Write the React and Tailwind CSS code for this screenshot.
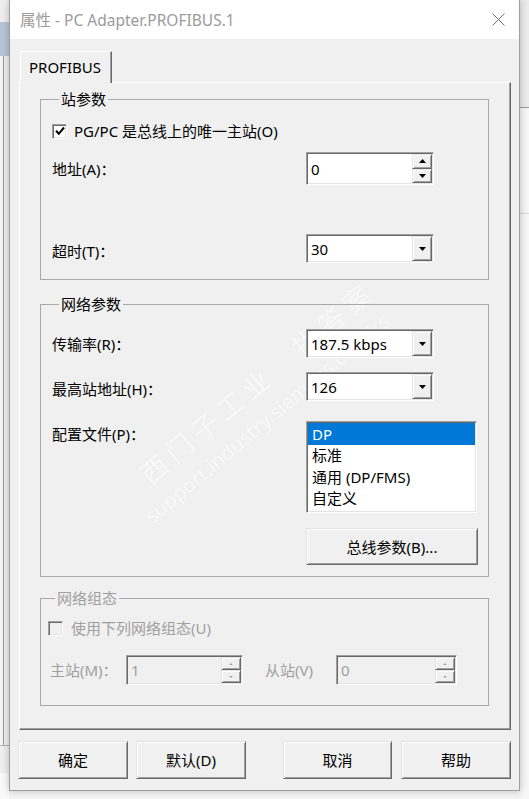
import React from 'react';

const sunken = 'border border-t-[#a0a0a0] border-l-[#a0a0a0] border-r-white border-b-white shadow-[inset_1px_1px_0_#696969,inset_-1px_-1px_0_#e3e3e3]';
const raised = 'border border-t-[#e3e3e3] border-l-[#e3e3e3] border-r-[#696969] border-b-[#696969] shadow-[inset_1px_1px_0_#ffffff,inset_-1px_-1px_0_#a0a0a0]';

function Arrow({ up, color = '#000', w = 7, h = 4 }) {
  return (
    <svg width={w} height={h} viewBox="0 0 7 4">
      <polygon points={up ? '0,4 7,4 3.5,0' : '0,0 7,0 3.5,4'} fill={color} />
    </svg>
  );
}

function Check({ checked, disabled }) {
  return (
    <div className={`w-[15px] h-[15px] shrink-0 flex items-center justify-center ${sunken} ${disabled ? 'bg-[#f0f0f0]' : 'bg-white'}`}>
      {checked && (
        <svg width="10" height="10" viewBox="0 0 10 10">
          <path d="M1 4.8 L3.8 7.8 L9 1.5" stroke="#000" strokeWidth="2" fill="none" />
        </svg>
      )}
    </div>
  );
}

function Spin({ value, className, disabled }) {
  const arrow = disabled ? '#a0a0a0' : '#000';
  return (
    <div className={`flex p-[1px] ${sunken} ${disabled ? 'bg-[#f0f0f0] text-[#a0a0a0]' : 'bg-white'} ${className}`}>
      <div className="flex-1 flex items-center pl-[3px]">{value}</div>
      <div className="w-[20px] flex flex-col">
        <div className={`flex-1 flex items-center justify-center bg-[#f0f0f0] ${raised}`}>
          {disabled ? <Arrow up color={arrow} w={4} h={2} /> : <Arrow up color={arrow} />}
        </div>
        <div className={`flex-1 flex items-center justify-center bg-[#f0f0f0] ${raised}`}>
          {disabled ? <Arrow color={arrow} w={4} h={2} /> : <Arrow color={arrow} />}
        </div>
      </div>
    </div>
  );
}

function Combo({ value, className }) {
  return (
    <div className={`flex p-[1px] bg-white ${sunken} ${className}`}>
      <div className="flex-1 flex items-center pl-[3px]">{value}</div>
      <div className={`w-[20px] flex items-center justify-center bg-[#f0f0f0] ${raised}`}>
        <Arrow />
      </div>
    </div>
  );
}

function Group({ title, disabled, className, children }) {
  return (
    <fieldset className={`border border-[#a9a9a9] ${className}`}>
      <legend className={`ml-[7px] px-[2px] leading-[20px] ${disabled ? 'text-[#a0a0a0]' : ''}`}>{title}</legend>
      {children}
    </fieldset>
  );
}

function Button({ children, className }) {
  return (
    <div className={`flex items-center justify-center bg-[#f0f0f0] ${raised} ${className}`}>{children}</div>
  );
}

const profiles = ['DP', '标准', '通用 (DP/FMS)', '自定义'];

export default function App() {
  return (
    <div className="relative flex items-start w-[529px] h-[799px] overflow-hidden bg-[#f6f6f6] text-[15px] leading-[20px] text-black font-['Noto_Sans','Noto_Sans_CJK_SC',sans-serif]">
      {/* window behind, left edge */}
      <div className="w-[9px] h-full shrink-0 flex flex-col">
        <div className="h-[22px] bg-[#f0f0f0]" />
        <div className="h-[34px] bg-[#b9c6d7]" />
        <div className="h-[689px] ml-[3px] border-l border-[#9a9a9a] bg-[#f0f0f0]" />
        <div className="h-[28px] border-t border-[#b4b4b4] bg-[#f0f0f0]" />
        <div className="flex-1 bg-[#fafafa]" />
      </div>

      {/* dialog */}
      <div className="relative z-10 w-[511px] h-[791px] shrink-0 flex flex-col border border-t-0 border-[#9f9f9f] shadow-[0_0_8px_rgba(0,0,0,0.25)]">
        <div className="h-[39px] shrink-0 bg-white flex items-center justify-between pl-[10px] pr-[14px] text-[15.5px] text-[#9b9b9b]">
          <span>属性 - PC Adapter.PROFIBUS.1</span>
          <svg width="13" height="13" viewBox="0 0 13 13">
            <path d="M0.5 0.5 L12.5 12.5 M12.5 0.5 L0.5 12.5" stroke="#707070" strokeWidth="1" />
          </svg>
        </div>

        <div className="flex-1 bg-[#f0f0f0] pl-[9px] pt-[12px]">
          <div className="relative z-10 -mb-[1px] ml-[1px] w-[92px] h-[32px] bg-[#f0f0f0] border border-b-0 border-t-white border-l-white border-r-[#696969] shadow-[inset_-1px_0_0_#a0a0a0] flex items-center pl-[8px] pb-[1px]">
            PROFIBUS
          </div>

          <div className="relative isolate w-[492px] h-[648px] border border-t-white border-l-white border-r-[#696969] border-b-[#696969] shadow-[inset_-1px_-1px_0_#a0a0a0] pl-[20px] pr-[21px] pt-[6px]">
            {/* watermark, behind the controls */}
            <div className="pointer-events-none absolute -z-10 left-[124px] top-[380px] origin-[0_50%] rotate-[-40deg] whitespace-nowrap text-[27px] leading-[30px] tracking-[6px] text-white/80 [text-shadow:0_0_1px_rgba(0,0,0,0.06)]">
              西门子工业　找答案
            </div>
            <div className="pointer-events-none absolute -z-10 left-[128px] top-[426px] origin-[0_50%] rotate-[-40deg] whitespace-nowrap text-[20px] leading-[20px] text-white/80 [text-shadow:0_0_1px_rgba(0,0,0,0.06)]">
              support.industry.siemens.com/cs
            </div>

            <Group title="站参数" className="pl-[11px] pr-[10px] pt-[12px] pb-[16px]">
              <div className="flex items-center h-[20px]">
                <Check checked />
                <span className="ml-[7px]">PG/PC 是总线上的唯一主站(O)</span>
              </div>
              <div className="flex items-center mt-[11px]">
                <span className="w-[254px]">地址(A)：</span>
                <Spin value="0" className="w-[128px] h-[33px]" />
              </div>
              <div className="flex items-center mt-[49px]">
                <span className="w-[254px] pt-[4px]">超时(T)：</span>
                <Combo value="30" className="w-[128px] h-[29px]" />
              </div>
            </Group>

            <Group title="网络参数" className="mt-[14px] pl-[11px] pr-[10px] pt-[15px] pb-[11px]">
              <div className="flex items-center">
                <span className="w-[254px]">传输率(R)：</span>
                <Combo value="187.5 kbps" className="w-[128px] h-[29px]" />
              </div>
              <div className="flex items-center mt-[14px]">
                <span className="w-[254px] pt-[4px]">最高站地址(H)：</span>
                <Combo value="126" className="w-[128px] h-[29px]" />
              </div>
              <div className="flex items-start mt-[20px]">
                <span className="w-[254px] pt-[3px]">配置文件(P)：</span>
                <div className={`w-[171px] h-[92px] p-[1px] bg-white ${sunken}`}>
                  {profiles.map((p, i) => (
                    <div key={p} className={`h-[21.5px] flex items-center pl-[4px] ${i === 0 ? 'bg-[#0078d7] text-white' : ''}`}>{p}</div>
                  ))}
                </div>
              </div>
              <div className="mt-[15px] pl-[254px]">
                <Button className="w-[172px] h-[37px]">总线参数(B)...</Button>
              </div>
            </Group>

            <Group title="网络组态" disabled className="mt-[11px] pl-[7px] pr-[10px] pt-[10px] pb-[20px] text-[#a0a0a0]">
              <div className="flex items-center h-[20px]">
                <Check disabled />
                <span className="ml-[8px]">使用下列网络组态(U)</span>
              </div>
              <div className="flex items-center mt-[17px]">
                <span className="ml-[2px] w-[76px]">主站(M)：</span>
                <Spin disabled value="1" className="w-[117px] h-[30px]" />
                <span className="ml-[22px] w-[71px]">从站(V)</span>
                <Spin disabled value="0" className="w-[121px] h-[30px]" />
              </div>
            </Group>
          </div>

          <div className="flex -ml-[1px] mt-[11px]">
            <Button className="w-[110px] h-[38px]">确定</Button>
            <Button className="ml-[8px] w-[110px] h-[38px]">默认(D)</Button>
            <Button className="ml-[37px] w-[109px] h-[38px]">取消</Button>
            <Button className="ml-[9px] w-[110px] h-[38px]">帮助</Button>
          </div>
        </div>
      </div>

      {/* window behind, right edge */}
      <div className="flex-1 h-full flex flex-col">
        <div className="h-[107px] bg-[#ececec]" />
        <div className="h-[106px] border-t border-[#a0a0a0] bg-[#f7f7f7]" />
        <div className="flex-1 border-t border-[#dadada] bg-[#f7f7f7]" />
      </div>
    </div>
  );
}
